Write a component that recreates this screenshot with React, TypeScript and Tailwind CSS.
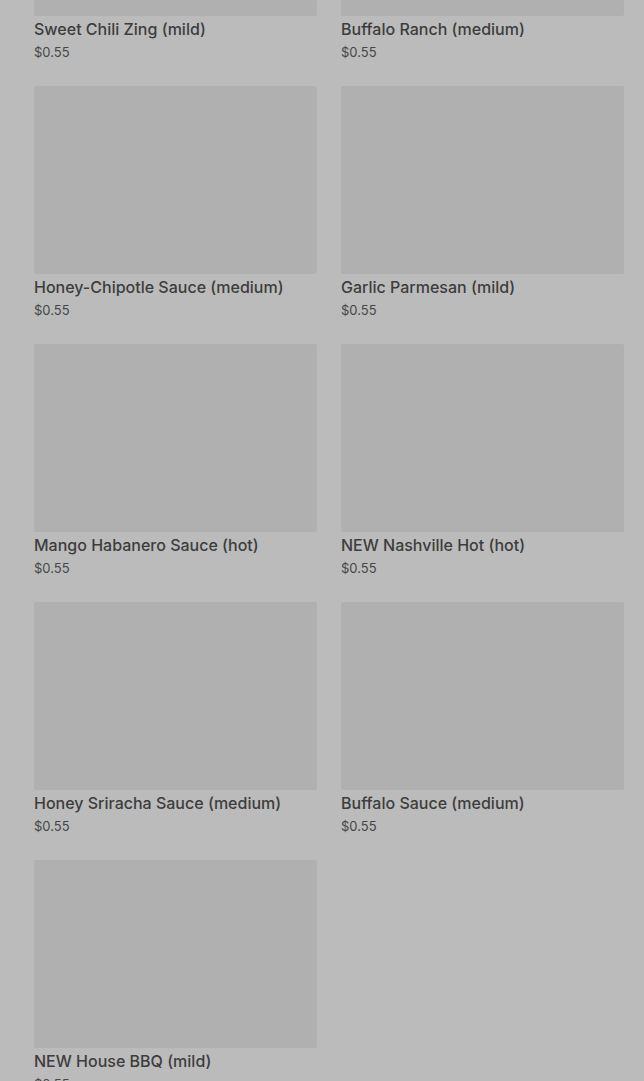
const sauces = [
  'Sweet Chili Zing (mild)',
  'Buffalo Ranch (medium)',
  'Honey-Chipotle Sauce (medium)',
  'Garlic Parmesan (mild)',
  'Mango Habanero Sauce (hot)',
  'NEW Nashville Hot (hot)',
  'Honey Sriracha Sauce (medium)',
  'Buffalo Sauce (medium)',
  'NEW House BBQ (mild)',
];

export default function App() {
  return (
    <div
      className="h-[1081px] overflow-hidden bg-[#bbbbbb] pl-[34px] pr-[20px]"
      style={{ fontFamily: 'Inter, "Noto Sans", sans-serif' }}
    >
      <div className="-mt-[172px] grid grid-cols-2 gap-x-[24px] gap-y-[26px]">
        {sauces.map((name) => (
          <div key={name}>
            <div className="h-[188px] rounded-[2px] bg-[#b0b0b0]" />
            <div className="mt-[3px] text-[16px] font-medium leading-[20px] text-[#3d3d3d]">{name}</div>
            <div className="mt-[5px] text-[13px] leading-[16px] text-[#474747]">$0.55</div>
          </div>
        ))}
      </div>
    </div>
  );
}
